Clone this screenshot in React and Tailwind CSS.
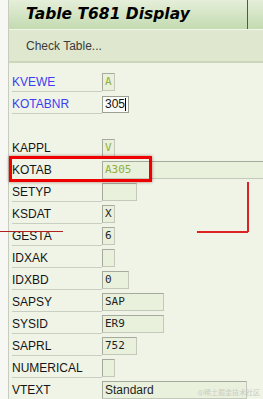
const rows = [
  { label: "KVEWE", value: "A", w: "w-[13px]", kind: "disp", blue: true },
  { label: "KOTABNR", value: "305", w: "w-[27px]", kind: "edit", blue: true },
  null,
  { label: "KAPPL", value: "V", w: "w-[13px]", kind: "disp" },
  { label: "KOTAB", value: "A305", w: "w-[190px]", kind: "disp" },
  { label: "SETYP", value: "", w: "w-[35px]", kind: "box" },
  { label: "KSDAT", value: "X", w: "w-[13px]", kind: "box" },
  { label: "GESTA", value: "6", w: "w-[13px]", kind: "box" },
  { label: "IDXAK", value: "", w: "w-[13px]", kind: "box" },
  { label: "IDXBD", value: "0", w: "w-[27px]", kind: "box" },
  { label: "SAPSY", value: "SAP", w: "w-[62px]", kind: "box" },
  { label: "SYSID", value: "ER9", w: "w-[62px]", kind: "box" },
  { label: "SAPRL", value: "752", w: "w-[35px]", kind: "box" },
  { label: "NUMERICAL", value: "", w: "w-[13px]", kind: "box" },
  { label: "VTEXT", value: "Standard", w: "w-[145px]", kind: "text" },
];

function Field({ row }) {
  if (row.kind === "edit") {
    return (
      <div className={`${row.w} h-[17px] bg-[#fbfcf8] border border-[#9aa092] flex items-center pl-[2px] text-[12px] text-[#111] font-['Liberation_Sans',sans-serif]`}>
        {row.value}
        <span className="w-px h-[13px] bg-black" />
      </div>
    );
  }
  const color = row.kind === "disp" ? "text-[#92ad3a]" : "text-[#1f1f1f]";
  const font =
    row.kind === "text"
      ? "font-['Liberation_Sans',sans-serif] text-[12px]"
      : "font-['DejaVu_Sans_Mono',monospace] text-[11px]";
  return (
    <div
      className={`${row.w} shrink-0 h-[18px] bg-[#e9f1dd] border border-[#c2c8ba] border-t-[#a4aa9c] border-l-[#a4aa9c] flex items-center pl-[2px] ${color} ${font}`}
    >
      {row.value}
    </div>
  );
}

export default function App() {
  return (
    <div className="relative w-[263px] h-[399px] overflow-hidden bg-[#f7f8f4] font-['Liberation_Sans',sans-serif]">
      <div className="ml-[8px] h-full border-l border-[#c6cdbf] bg-[#eff4e7]">
        <div className="h-[30px] flex items-center pl-[17px] bg-gradient-to-b from-[#e5eed9] to-[#c3dbb1] border-b border-[#f2f6ec]">
          <span className="font-['DejaVu_Sans',sans-serif] font-bold italic text-[15.5px] text-black">
            Table T681 Display
          </span>
        </div>
        <div className="h-[33px] flex items-center pl-[17px] bg-[#dfe8cf] border-b-2 border-[#cbd6bd]">
          <span className="text-[12px] text-[#3b3b3b]">Check Table...</span>
        </div>
        <div className="pt-[8px] pl-[3px] flex flex-col">
          {rows.map((row, i) =>
            row ? (
              <div key={i} className="h-[22px] flex items-center">
                <div
                  className={`w-[90px] shrink-0 h-[20px] flex items-center border-b border-[#c9cec2] text-[12px] ${
                    row.blue ? "text-[#3d3df2]" : "text-[#151515]"
                  }`}
                >
                  {row.label}
                </div>
                <Field row={row} />
              </div>
            ) : (
              <div key={i} className="h-[22px]" />
            )
          )}
        </div>
      </div>

      {/* annotations */}
      <div className="absolute left-[247px] top-0 w-px h-[29px] bg-[#dd1a1a]" />
      <div className="absolute left-[9px] top-[156px] w-[143px] h-[26px] border-[3px] border-[#ee0000] shadow-[0_0_3px_rgba(120,0,0,0.5)]" />
      <div className="absolute left-[247px] top-[182px] w-[1.5px] h-[50px] bg-[#dd2222]" />
      <div className="absolute left-[197px] top-[231px] w-[51px] h-[1.5px] bg-[#dd2222]" />
      <div className="absolute left-0 top-[231px] w-[63px] h-px bg-[#b02020]" />

      <div className="absolute right-[3px] bottom-[2px] text-[7px] text-[#c9cdc3] font-['Noto_Sans_CJK_SC',sans-serif]">
        @稀土掘金技术社区
      </div>
    </div>
  );
}
